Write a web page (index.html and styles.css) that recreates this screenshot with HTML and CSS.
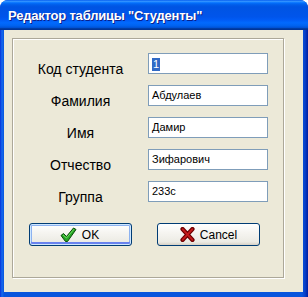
FILE: index.html
```html
<!DOCTYPE html>
<html lang="ru">
<head>
<meta charset="utf-8">
<link rel="stylesheet" href="styles.css">
</head>
<body>
<div class="window">
  <div class="titlebar">Редактор таблицы "Студенты"</div>
  <div class="client">
    <div class="panel">
      <div class="form">
        <div class="label">Код студента</div>
        <div class="field"><span class="sel">1</span></div>
        <div class="label">Фамилия</div>
        <div class="field">Абдулаев</div>
        <div class="label">Имя</div>
        <div class="field">Дамир</div>
        <div class="label">Отчество</div>
        <div class="field">Зифарович</div>
        <div class="label">Группа</div>
        <div class="field">233с</div>
      </div>
      <div class="buttons">
        <div class="btn default">
          <svg class="ico" width="17" height="16" viewBox="0 0 17 16">
            <polygon points="1,8.5 3.5,6.5 6.5,9.5 13.5,1 16,2.5 7.5,14.5 5.5,14.5" fill="#25A525" stroke="#0A4A0A" stroke-width="1" stroke-linejoin="round"/>
            <polyline points="3,8 6.5,11 14,2.2" fill="none" stroke="#6FDB5F" stroke-width="1"/>
          </svg>
          <span>OK</span>
        </div>
        <div class="btn">
          <svg class="ico" width="15" height="15" viewBox="0 0 15 15">
            <path d="M2.5 2 L12.5 13 M12.5 2 L2.5 13" stroke="#6E0000" stroke-width="4.2" stroke-linecap="round"/>
            <path d="M2.8 2.3 L12.2 12.7 M12.2 2.3 L2.8 12.7" stroke="#C41A1A" stroke-width="2" stroke-linecap="round"/>
          </svg>
          <span>Cancel</span>
        </div>
      </div>
    </div>
  </div>
</div>
</body>
</html>
```
FILE: styles.css
```css
html, body {
  margin: 0;
  padding: 0;
  background: #ffffff;
}
.window {
  width: 308px;
  height: 297px;
  box-sizing: border-box;
  display: flex;
  flex-direction: column;
  background: linear-gradient(to right, #0831D9 0px, #166AEE 2px, #0855DD 4px, #0855DD 302px, #0840C9 305px, #001EA0 308px);
  border-radius: 8px 8px 0 0;
  overflow: hidden;
}
.titlebar {
  height: 30px;
  flex: none;
  box-sizing: border-box;
  padding: 8px 0 0 8px;
  font-family: "Liberation Sans", Arial, sans-serif;
  font-weight: bold;
  font-size: 13px;
  letter-spacing: -0.2px;
  line-height: 16px;
  color: #ffffff;
  text-shadow: 1px 1px 0 #0A1E8A;
  background: linear-gradient(to bottom, #0058EE 0%, #3593FF 4%, #288EFF 6%, #127DFF 8%, #036FFC 10%, #0262EE 14%, #0057E5 20%, #0054E3 24%, #0055EB 56%, #005BF5 66%, #026AFE 76%, #0062EF 86%, #0052D6 92%, #0040AB 94%, #003092 100%);
}
.client {
  flex: 1;
  margin: 0 5px 5px 4px;
  background: #ECE9D8;
  padding: 8px 0 0 8px;
}
.panel {
  box-sizing: border-box;
  width: 272px;
  height: 240px;
  border: 1px solid #ACA899;
  box-shadow: 1px 1px 0 #ffffff, inset 1px 1px 0 #ffffff;
}
.form {
  display: grid;
  grid-template-columns: 135px 120px;
  grid-auto-rows: 21px;
  row-gap: 11px;
  padding-top: 14px;
}
.label {
  align-self: end;
  text-align: center;
  font-family: "Liberation Sans", Arial, sans-serif;
  font-size: 14px;
  line-height: 14px;
  margin-bottom: -2px;
  color: #000000;
}
.field {
  box-sizing: border-box;
  height: 21px;
  border: 1px solid #7F9DB9;
  background: #ffffff;
  padding-left: 3px;
  font-family: "Liberation Sans", Arial, sans-serif;
  font-size: 11px;
  line-height: 19px;
  color: #000000;
}
.sel {
  display: inline-block;
  background: #316AC5;
  color: #ffffff;
  line-height: 13px;
  padding: 0 1px;
  vertical-align: middle;
}
.buttons {
  display: flex;
  gap: 25px;
  margin-top: 21px;
  padding-left: 16px;
}
.btn {
  box-sizing: border-box;
  width: 103px;
  height: 23px;
  border: 1px solid #003C74;
  border-radius: 3px;
  background: linear-gradient(to bottom, #FFFFFF 0%, #F6F5F1 40%, #ECEBE4 85%, #D6D0C5 100%);
  display: flex;
  align-items: center;
  justify-content: center;
  gap: 5px;
  font-family: "Liberation Sans", Arial, sans-serif;
  font-size: 12px;
  color: #000000;
}
.btn.default {
  box-shadow: inset 0 0 0 1px #CEE7FF, inset 0 -2px 0 1px #6982EE, inset 0 0 0 2px #8DB2F0;
  padding-right: 2px;
}
.ico {
  display: block;
  flex: none;
}
```
